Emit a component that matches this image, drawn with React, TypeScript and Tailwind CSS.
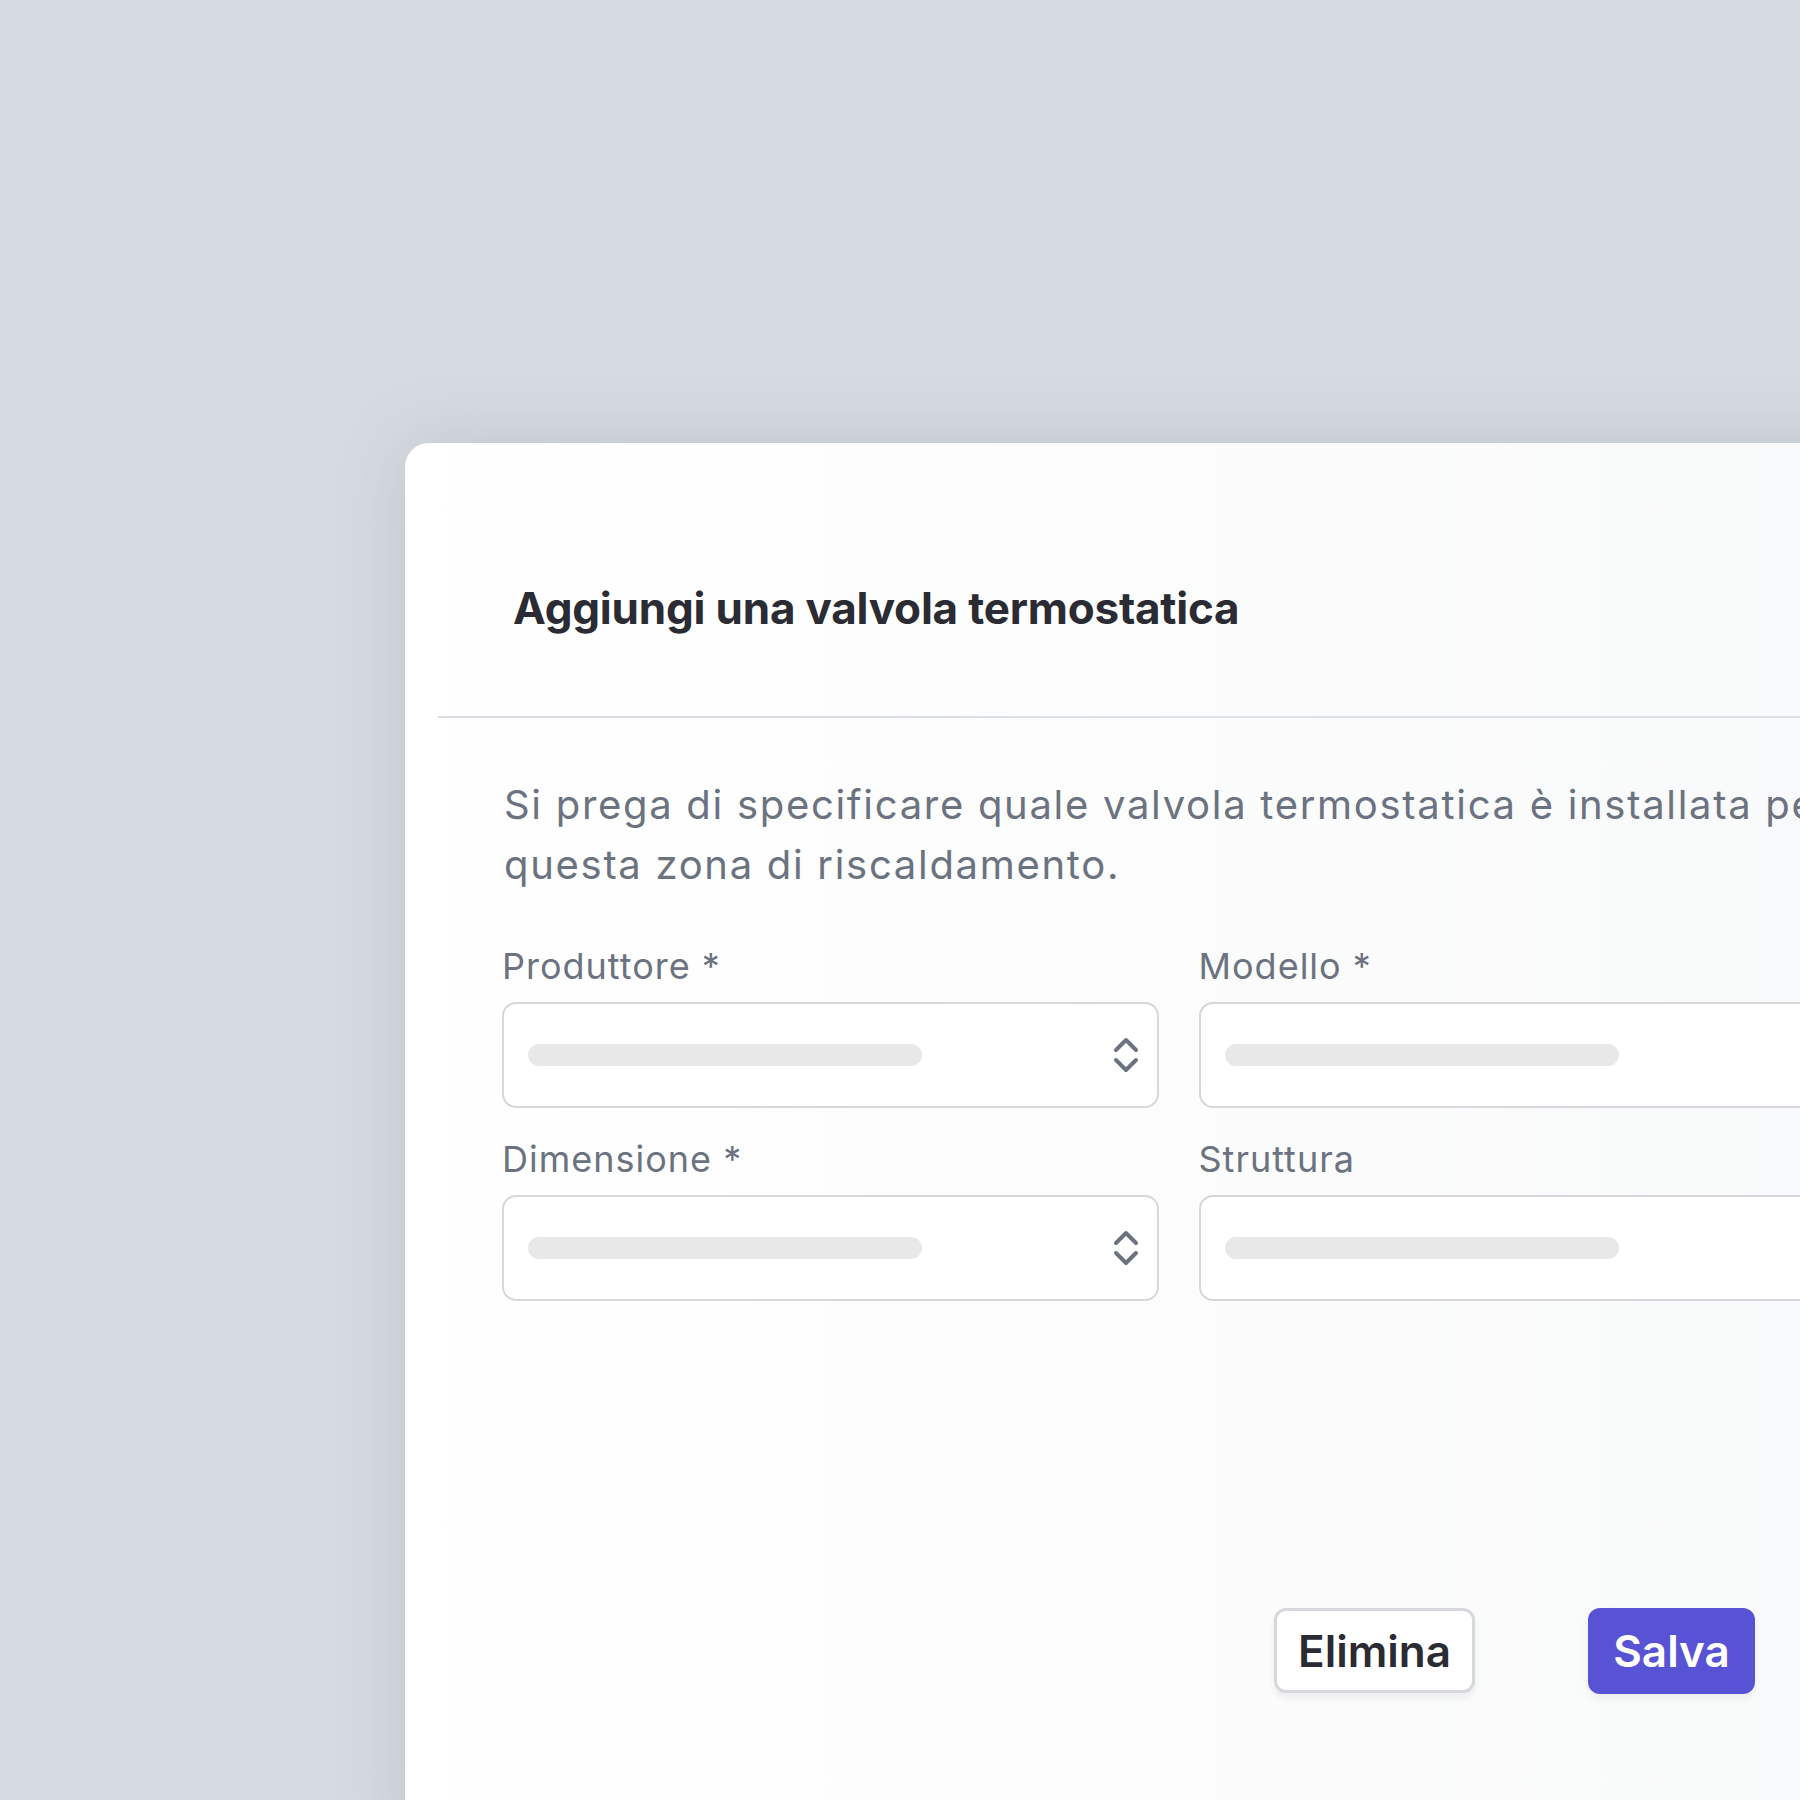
import React from "react";

function Chevrons() {
  return (
    <svg width="26" height="38" viewBox="0 0 26 38" fill="none" className="shrink-0">
      <polyline points="3,14 13,4 23,14" stroke="#6b7280" strokeWidth="4" strokeLinecap="round" strokeLinejoin="round" />
      <polyline points="3,24 13,34 23,24" stroke="#6b7280" strokeWidth="4" strokeLinecap="round" strokeLinejoin="round" />
    </svg>
  );
}

function Field({ label, select }: { label: string; select?: boolean }) {
  return (
    <div className="flex flex-col gap-[14px]">
      <div className="text-[36px] leading-[44px] tracking-[1px] text-[#6b7280]">{label}</div>
      <div className="h-[106px] rounded-[14px] border-2 border-[#d5d7db] bg-white flex items-center pl-[24px] pr-[18px] justify-between">
        <div className="h-[22px] w-[394px] rounded-full bg-[#e8e8e9]" />
        {select ? <Chevrons /> : null}
      </div>
    </div>
  );
}

export default function App() {
  return (
    <div
      className="w-[1800px] h-[1800px] overflow-hidden bg-[#d6dbe2] pt-[443px] pl-[405px]"
      style={{ fontFamily: "Inter, 'Noto Sans', sans-serif" }}
    >
      <div className="w-[1549px] h-[1400px] rounded-t-[24px] bg-gradient-to-r from-white to-[#f8f9fa] shadow-[0_0_70px_rgba(110,120,120,0.22)] pt-[139px]">
        <div className="pl-[108px] text-[44px] leading-[53px] font-bold tracking-[-0.2px] text-[#2a2b33]">
          Aggiungi una valvola termostatica
        </div>
        <div className="mx-[33px] mt-[81px] h-[2px] bg-[#dcdfe3]" />
        <div className="px-[99px]">
          <p className="mt-[57px] text-[40px] leading-[60px] tracking-[1.7px] text-[#6b7280]">
            Si prega di specificare quale valvola termostatica è installata per questa zona di riscaldamento.
          </p>
          <div className="mt-[49px] grid grid-cols-2 gap-x-[40px] gap-y-[29px] ml-[-2px]">
            <Field label="Produttore *" select />
            <Field label="Modello *" select />
            <Field label="Dimensione *" select />
            <Field label="Struttura" select />
          </div>
          <div className="mt-[307px] flex justify-end gap-[113px] pr-[100px]">
            <button className="h-[85px] w-[201px] rounded-[12px] border-[3px] border-[#d6d8dc] bg-white text-[44px] font-semibold text-[#2a2b33] shadow-[0_5px_6px_rgba(0,0,0,0.06)]">
              Elimina
            </button>
            <button className="h-[86px] w-[167px] rounded-[12px] bg-[#5853d4] text-[44px] font-semibold text-white shadow-[0_4px_8px_rgba(0,0,0,0.06)]">
              Salva
            </button>
          </div>
        </div>
      </div>
    </div>
  );
}
